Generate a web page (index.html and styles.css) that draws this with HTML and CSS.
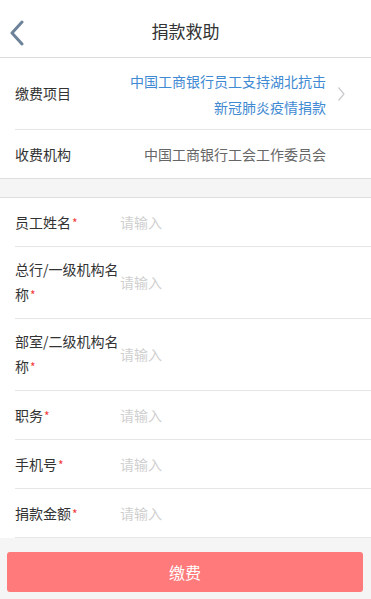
FILE: index.html
```html
<!DOCTYPE html>
<html lang="zh-CN">
<head>
<meta charset="utf-8">
<meta name="viewport" content="width=device-width, initial-scale=1">
<title>捐款救助</title>
<link rel="stylesheet" href="styles.css">
</head>
<body>
<div class="page">
  <header class="header">
    <svg class="back" width="16" height="26" viewBox="0 0 16 26"><polyline points="13,2 3,13 13,24" fill="none" stroke="#6d8399" stroke-width="3" stroke-linecap="round" stroke-linejoin="round"/></svg>
    <h1 class="title">捐款救助</h1>
  </header>

  <section class="group">
    <div class="row row-info row-tall">
      <div class="label">缴费项目</div>
      <div class="value value-link">中国工商银行员工支持湖北抗击新冠肺炎疫情捐款</div>
      <svg class="chev" width="8" height="16" viewBox="0 0 8 16"><polyline points="1.5,1.5 7,8 1.5,14.5" fill="none" stroke="#c9c9ce" stroke-width="1.2"/></svg>
    </div>
    <div class="row row-info">
      <div class="label">收费机构</div>
      <div class="value">中国工商银行工会工作委员会</div>
      <span class="chev chev-space"></span>
    </div>
  </section>

  <div class="gap"></div>

  <section class="group">
    <label class="row">
      <span class="label">员工姓名<span class="req">*</span></span>
      <input class="input" type="text" placeholder="请输入">
    </label>
    <label class="row row-two">
      <span class="label"><span>总行/一级机构名</span><span>称</span><span class="req">*</span></span>
      <input class="input" type="text" placeholder="请输入">
    </label>
    <label class="row row-two">
      <span class="label"><span>部室/二级机构名</span><span>称</span><span class="req">*</span></span>
      <input class="input" type="text" placeholder="请输入">
    </label>
    <label class="row">
      <span class="label">职务<span class="req">*</span></span>
      <input class="input" type="text" placeholder="请输入">
    </label>
    <label class="row">
      <span class="label">手机号<span class="req">*</span></span>
      <input class="input" type="text" placeholder="请输入">
    </label>
    <label class="row">
      <span class="label">捐款金额<span class="req">*</span></span>
      <input class="input" type="text" placeholder="请输入">
    </label>
  </section>

  <footer class="footer">
    <button class="pay" type="button">缴费</button>
  </footer>
</div>
</body>
</html>
```

FILE: styles.css
```css
* { box-sizing: border-box; }
html, body {
  margin: 0;
  padding: 0;
  background: #f5f5f5;
  font-family: "Noto Sans CJK SC", "Noto Sans", sans-serif;
  color: #333;
}
.page {
  min-height: 100vh;
  display: flex;
  flex-direction: column;
}
.header {
  position: relative;
  height: 58px;
  background: #fff;
  border-bottom: 1px solid #dcdcdc;
  display: flex;
  align-items: center;
  justify-content: center;
}
.back {
  position: absolute;
  left: 9px;
  top: 20px;
}
.title {
  margin: 0;
  font-size: 17px;
  font-weight: 400;
  color: #333;
  padding-top: 4px;
}
.group {
  background: #fff;
  padding-left: 15px;
}
.gap {
  height: 20px;
  border-top: 1px solid #dedede;
  border-bottom: 1px solid #dedede;
  margin-top: -1px;
}
.row {
  display: flex;
  align-items: center;
  min-height: 49px;
  border-bottom: 1px solid #e6e6e6;
  font-size: 14px;
  line-height: 25px;
}
.row-tall { min-height: 72px; }
.row-two { padding: 10px 0 11px; }
.label {
  width: 105px;
  flex: none;
  color: #333;
}
.value {
  flex: 1;
  text-align: right;
  color: #666;
}
.value-link {
  color: #3f8ad2;
  line-height: 26px;
}
.chev {
  flex: none;
  width: 8px;
  margin-left: 11px;
  margin-right: 26px;
}
.chev-space { display: inline-block; height: 1px; }
.req {
  color: #f23b3b;
  font-size: 12px;
  line-height: 1;
  margin-left: 1px;
}
.input {
  flex: 1;
  min-width: 0;
  border: none;
  outline: none;
  background: transparent;
  font-family: inherit;
  font-size: 14px;
  color: #333;
  padding: 0;
  height: 25px;
}
.input::placeholder { color: #cfcfcf; }
.footer {
  flex: 1;
  padding: 14px 8px 15px 7px;
  background: #f5f5f5;
}
.pay {
  display: block;
  width: 100%;
  height: 40px;
  border: none;
  border-radius: 3px;
  background: #ff7b7b;
  color: #fff;
  font-family: inherit;
  font-size: 16px;
  padding: 0;
}
```
